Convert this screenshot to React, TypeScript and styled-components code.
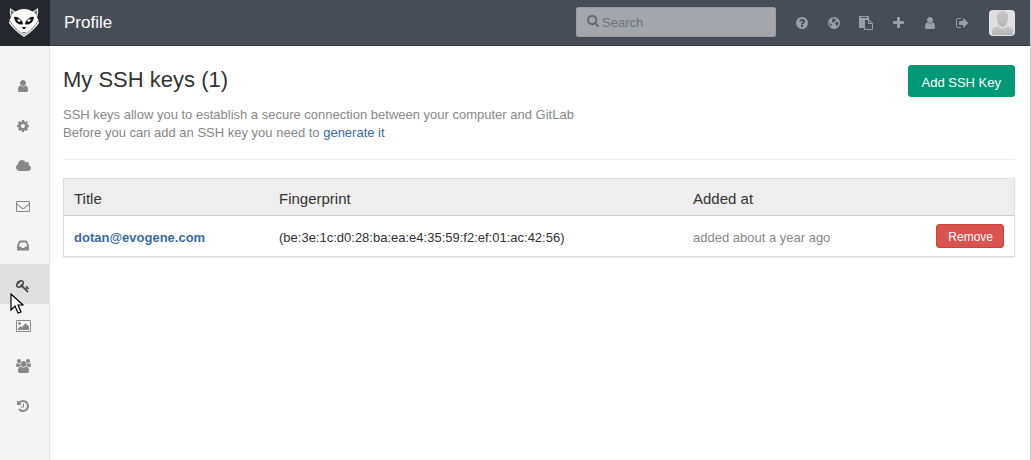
import React from "react";
import styled, { createGlobalStyle } from "styled-components";

const GlobalStyle = createGlobalStyle`
  * { box-sizing: border-box; }
  body {
    margin: 0;
    background: #fff;
    color: #333;
    font-family: "Liberation Sans", Arial, sans-serif;
    font-size: 13px;
    line-height: 18px;
  }
  a { color: #3b6a9e; text-decoration: none; }
  button, input { font: inherit; }
`;

/* Icon outlines are drawn in font units: y grows upwards, 1792 units per em. */
const glyphs = {
  user: { w: 1280, d: "M1280 137q0-109-62.5-187T1067-128H213q-88 0-150.5 78T0 137q0 85 8.5 160.5t31.5 152 58.5 131 94 89T327 704q131-128 313-128t313 128q76 0 134.5-34.5t94-89 58.5-131 31.5-152T1280 137zm-256 887q0-159-112.5-271.5T640 640 368.5 752.5 256 1024t112.5 271.5T640 1408t271.5-112.5T1024 1024z" },
  plus: { w: 1408, d: "M1408 800V608q0-40-28-68t-68-28H896V96q0-40-28-68T800 0H608q-40 0-68 28t-28 68v416H96q-40 0-68 28T0 608v192q0 40 28 68t68 28h416v416q0 40 28 68t68 28h192q40 0 68-28t28-68V896h416q40 0 68-28t28-68z" },
  search: { w: 1664, d: "M1152 704q0 185-131.5 316.5T704 1152 387.5 1020.5 256 704t131.5-316.5T704 256t316.5 131.5T1152 704zm512-832q0-52-38-90t-90-38q-54 0-90 38l-343 342Q924 0 704 0 561 0 430.5 55.5T205.5 205.5t-150 225T0 704t55.5 273.5 150 225 225 150T704 1408t273.5-55.5 225-150 150-225T1408 704q0-220-124-399l343-343q37-37 37-90z" },
  cog: { w: 1536, d: "M1024 640q0 106-75 181t-181 75-181-75-75-181 75-181 181-75 181 75 75 181zm512 109V527q0-12-8-23t-20-13l-185-28q-19-54-39-91 35-50 107-138 10-12 10-25t-9-23q-27-37-99-108t-94-71q-12 0-26 9l-138 108q-44-23-91-38-16-136-29-186-7-28-36-28H657q-14 0-24.5 8.5T621-98L593 86q-49 16-90 37L362 16q-10-9-25-9-14 0-25 11-126 114-165 168-7 10-7 23 0 12 8 23 15 21 51 66.5t54 70.5q-27 50-41 99L29 495q-13 2-21 12.5T0 531v222q0 12 8 23t19 13l186 28q14 46 39 92-40 57-107 138-10 12-10 24 0 10 9 23 26 36 98.5 107.5T337 1273q13 0 26-10l138-107q44 23 91 38 16 136 29 186 7 28 36 28h222q14 0 24.5-8.5T915 1378l28-184q49-16 90-37l142 107q9 9 24 9 13 0 25-10 129-119 165-170 7-8 7-22 0-12-8-23-15-21-51-66.5t-54-70.5q26-50 41-98l183-28q13-2 21-12.5t8-23.5z" },
  key: { w: 1683, d: "M832 1024q0 80-56 136t-136 56-136-56-56-136q0-42 19-83-41 19-83 19-80 0-136-56t-56-136 56-136 136-56 136 56 56 136q0 42-19 83 41-19 83-19 80 0 136 56t56 136zm851-704q0-17-49-66t-66-49q-9 0-28.5 16t-36.5 33-38.5 40-24.5 26l-96-96 220-220q28-28 28-68 0-42-39-81t-81-39q-40 0-68 28L733 515Q557 384 368 384q-163 0-265.5 102.5T0 752q0 160 95 313t248 248 313 95q163 0 265.5-102.5T1024 1040q0-189-131-365l355-355 96 96q-3 3-26 24.5t-40 38.5-33 36.5-16 28.5q0 17 49 66t66 49q13 0 23-10 6-6 46-44.5t82-79.5 86.5-86 73-78 28.5-41z" },
  cloud: { w: 1920, d: "M1920 384q0-159-112.5-271.5T1536 0H448Q263 0 131.5 131.5T0 448q0 132 71 241.5T258 853q-2 28-2 43 0 212 150 362t362 150q158 0 286.5-88T1242 1090q70 62 166 62 106 0 181-75t75-181q0-75-41-138 129-30 213-134.5T1920 384z" },
  inbox: { w: 1536, d: "M1023 576h316q-1 3-2.5 8t-2.5 8l-212 496H414L202 592q-1-2-2.5-8t-2.5-8h316l95-192h320zm513 30V128q0-26-19-45t-45-19H64q-26 0-45 19T0 128v478q0 62 25 123l238 552q10 25 36.5 42t52.5 17h832q26 0 52.5-17t36.5-42l238-552q25-61 25-123z" },
  envelope: { w: 1792, d: "M1664 32v768q-32-36-69-66-268-206-426-338-51-43-83-67t-86.5-48.5T897 256h-2q-48 0-102.5 24.5T706 329t-83 67Q465 528 197 734q-37 30-69 66V32q0-13 9.5-22.5T160 0h1472q13 0 22.5 9.5T1664 32zm0 1051v24.500l-.5 13-3 12.500-5.500 9-9 7.500-14 2.500H160q-13 0-22.500-9.500T128 1120q0-168 147-284 193-152 401-317 6-5 35-29.500t46-37.500 44.500-31.500T852 391t43-9h2q20 0 43 9t50.500 27.500T1035 450t46 37.500 35 29.500q208 165 401 317 54 43 100.500 115.500T1664 1083zm128 37V32q0-66-47-113t-113-47H160q-66 0-113 47T0 32v1088q0 66 47 113t113 47h1472q66 0 113-47t47-113z" },
  image: { w: 1920, d: "M640 960q0-80-56-136t-136-56-136 56-56 136 56 136 136 56 136-56 56-136zm1024-384V128H256v192l320 320 160-160 512 512zm96 704H160q-13 0-22.5-9.5T128 1248V32q0-13 9.5-22.5T160 0h1600q13 0 22.5 9.5T1792 32v1216q0 13-9.5 22.5t-22.5 9.500zm160-32V32q0-66-47-113t-113-47H160q-66 0-113 47T0 32v1216q0 66 47 113t113 47h1600q66 0 113-47t47-113z" },
  users: { w: 1920, d: "M593 640q-162-5-265-128H194q-82 0-138 40.5T0 671q0 353 124 353 6 0 43.5-21t97.5-42.5T384 939q67 0 133 23-5-37-5-66 0-139 81-256zm1071-637q0-120-73-189.5T1397-256H523q-121 0-194 69.5T256 3q0 53 3.5 103.5t14 109T300 324t43 97.5 62 81 85.5 53.5T602 576q10 0 43-21.5t73-48 107-48T960 437t135 21.5 107 48 73 48 43 21.500q61 0 111.5-20t85.5-53.5 62-81 43-97.5 26.5-108.5 14-109T1664 3zM640 1280q0-106-75-181t-181-75-181 75-75 181 75 181 181 75 181-75 75-181zm704-384q0-159-112.5-271.5T960 512 688.5 624.5 576 896t112.5 271.5T960 1280t271.5-112.5T1344 896zm576-225q0-78-56-118.5T1726 512h-134q-103 123-265 128 81 117 81 256 0 29-5 66 66-23 133-23 59 0 119 21.5t97.5 42.5 43.5 21q124 0 124-353zm-128 609q0-106-75-181t-181-75-181 75-75 181 75 181 181 75 181-75 75-181z" },
  history: { w: 1536, d: "M1536 640q0-156-61-298T1311 97t-245-164-298-61q-172 0-327 72.5T177 149q-7 10-6.5 22.5T179 192l137 138q10 9 25 9 16-2 23-12 73-95 179-147t225-52q104 0 198.5 40.5T1130 278t109.5 163.5T1280 640t-40.5 198.5T1130 1002t-163.5 109.5T768 1152q-98 0-188-35.5T420 1015l137-138q31-30 14-69-17-40-59-40H64q-26 0-45 19T0 832v448q0 42 40 59 39 17 69-14l130-129q107 101 244.5 156.5T768 1408q156 0 298-61t245-164 164-245 61-298zM896 928V480q0-14-9-23t-23-9H544q-14 0-23 9t-9 23v64q0 14 9 23t23 9h224v352q0 14 9 23t23 9h64q14 0 23-9t9-23z" },
  signOut: { w: 1568, d: "M640 96q0-4 1-20t.5-26.5-3-23.5-10-19.5T608 0H288Q169 0 84.5 84.5T0 288v704q0 119 84.5 203.5T288 1280h320q13 0 22.5-9.5t9.5-22.5q0-4 1-20t.5-26.5-3-23.5-10-19.5T608 1152H288q-66 0-113-47t-47-113V288q0-66 47-113t113-47h312l11.5-1 11.5-3 8-5.500 7-9 2-13.500zm928 544q0-26-19-45L1005 51q-19-19-45-19t-45 19-19 45v288H448q-26 0-45 19t-19 45v384q0 26 19 45t45 19h448v288q0 26 19 45t45 19 45-19l544-544q19-19 19-45z" },
  paste: { w: 1792, d: "M768-128h896v640h-416q-40 0-68 28t-28 68v416H768V-128zm256 1440v64q0 13-9.5 22.5t-22.5 9.5H288q-13 0-22.5-9.5T256 1376v-64q0-13 9.5-22.5t22.5-9.5h704q13 0 22.5 9.5t9.5 22.500zm256-672h299l-299 299V640zm512-128v-672q0-40-28-68t-68-28H736q-40 0-68 28t-28 68v160H96q-40 0-68 28T0 96v1344q0 40 28 68t68 28h1088q40 0 68-28t28-68v-328q21-13 36-28l408-408q28-28 48-76t20-88z" },
  help: { w: 1536, d: "M896 160v192q0 14-9 23t-23 9H672q-14 0-23-9t-9-23V160q0-14 9-23t23-9h192q14 0 23 9t9 23zm256 672q0 88-55.5 163T958 1111t-170 41q-243 0-371-213-15-24 8-42l132-100q7-6 19-6 16 0 25 12 53 68 86 92 34 24 86 24 48 0 85.5-26t37.5-59q0-38-20-61t-68-45q-63-28-115.5-86.5T640 516v-36q0-14 9-23t23-9h192q14 0 23 9t9 23q0 19 21.5 49.5T972 579q32 18 49 28.5t46 35 44.5 48 28 60.5 12.5 81zm384-192q0-209-103-385.5T1153.5-25 768-128 382.5-25 103 254.5 0 640t103 385.5T382.5 1305 768 1408t385.5-103T1433 1025.5 1536 640z" },
  globe: { w: 1536, d: "M768 1408a768 768 0 1 0 0-1536a768 768 0 1 0 0 1536zM640 1270L860 1200 780 1110 900 1060 1000 1140 1120 1050 980 980 900 880 800 800 760 690 660 740 540 700 480 820 560 920 500 1050 560 1130zM1000 740L1130 800 1300 740 1340 560 1220 380 1120 220 1020 300 1020 480 900 580zM200 700L330 560 480 480 440 330 380 200 260 330 200 480z" },
};

type GlyphName = keyof typeof glyphs;

const Icon = ({ name, size = 14 }: { name: GlyphName; size?: number }) => (
  <svg
    aria-hidden="true"
    width={(glyphs[name].w / 1792) * size}
    height={size}
    viewBox={`0 -1536 ${glyphs[name].w} 1792`}
    fill="currentColor"
    overflow="visible"
  >
    <path transform="scale(1 -1)" fillRule="evenodd" d={glyphs[name].d} />
  </svg>
);

const Page = styled.div`
  display: flex;
  flex-direction: column;
  min-height: 100vh;
  border-right: 1px solid #ccc;
`;

const Header = styled.header`
  display: flex;
  align-items: center;
  height: 46px;
  background: #474d57;
  border-bottom: 1px solid #373d47;
  padding-right: 15px;
`;

const LogoLink = styled.a`
  display: flex;
  justify-content: center;
  align-items: center;
  width: 50px;
  height: 46px;
  padding-right: 2px;
  background: #24272d;
`;

const PageName = styled.h1`
  margin: 0 auto 0 14px;
  color: #fff;
  font-size: 17px;
  font-weight: 400;
  line-height: 44px;
`;

const SearchBox = styled.label`
  display: flex;
  align-items: center;
  gap: 3px;
  width: 200px;
  height: 30px;
  margin: 0 10px 2px 0;
  padding: 0 10px;
  border-radius: 2px;
  border: 1px solid #989da4;
  background: #a3a6ab;
  color: #666a70;

  svg { margin-bottom: 2px; }
`;

const SearchInput = styled.input`
  flex: 1;
  min-width: 0;
  padding: 2px 0 0;
  border: 0;
  outline: 0;
  background: transparent;
  color: #333;
  &::placeholder { color: #6f7276; opacity: 1; }
`;

const HeaderNav = styled.nav`
  display: flex;
  align-items: center;
`;

const HeaderLink = styled.a`
  display: flex;
  justify-content: center;
  width: 32px;
  color: #979faa;
`;

const Avatar = styled.a`
  display: flex;
  width: 26px;
  height: 26px;
  margin-left: 11px;
  border-radius: 4px;
  overflow: hidden;
`;

const Body = styled.div`
  display: flex;
  flex: 1;
`;

const Sidebar = styled.nav`
  flex: none;
  width: 50px;
  padding-top: 18px;
  background: #f4f4f4;
  border-right: 1px solid #e6e6e6;
`;

const SideLink = styled.a<{ $active?: boolean }>`
  display: flex;
  align-items: center;
  justify-content: center;
  height: 40px;
  padding: 4px 3px 0 0;
  background: ${(p) => (p.$active ? "#dfdfdf" : "transparent")};
  color: ${(p) => (p.$active ? "#444" : "#888")};
`;

const Content = styled.main`
  flex: 1;
  min-width: 0;
  padding: 19px 15px 20px 13px;
`;

const TitleRow = styled.div`
  display: flex;
  justify-content: space-between;
  align-items: flex-start;
`;

const Title = styled.h2`
  margin: 0 0 11px;
  font-size: 22px;
  font-weight: 400;
  line-height: 30px;
`;

const Button = styled.button<{ $danger?: boolean }>`
  height: ${(p) => (p.$danger ? 24 : 32)}px;
  padding: ${(p) => (p.$danger ? "1px 10px 0 11px" : "3px 13px 0")};
  border: 1px solid ${(p) => (p.$danger ? "#d43f3a" : "#019875")};
  border-radius: 3px;
  background: ${(p) => (p.$danger ? "#d9534f" : "#019875")};
  color: #fff;
  font-size: ${(p) => (p.$danger ? 12 : 13)}px;
`;

const Intro = styled.p`
  margin: 0 0 17px;
  color: #888;
`;

const Rule = styled.hr`
  margin: 0 0 18px;
  border: 0;
  border-top: 1px solid #eee;
`;

const Table = styled.table`
  width: 100%;
  border-collapse: separate;
  border-spacing: 0;
  border: 1px solid #ddd;
  box-shadow: 0 1px 1px rgba(0, 0, 0, 0.08);
`;

const HeadCell = styled.th<{ $width: string }>`
  width: ${(p) => p.$width};
  height: 37px;
  padding: 4px 10px 0;
  background: #eee;
  border-bottom: 1px solid #ccc;
  font-size: 15px;
  font-weight: 400;
  text-align: left;
`;

const Cell = styled.td<{ $muted?: boolean; $right?: boolean }>`
  height: 40px;
  padding: 3px 10px 0;
  color: ${(p) => (p.$muted ? "#888" : "#333")};
  text-align: ${(p) => (p.$right ? "right" : "left")};
`;

const ActionCell = styled(Cell)`
  padding-top: 0;
`;

const Cursor = styled.svg`
  position: absolute;
  left: 10px;
  top: 293px;
`;

const headerLinks: { name: GlyphName; label: string }[] = [
  { name: "help", label: "Help" },
  { name: "globe", label: "Public area" },
  { name: "paste", label: "Snippets" },
  { name: "plus", label: "New project" },
  { name: "user", label: "Your profile" },
  { name: "signOut", label: "Sign out" },
];

const sideLinks: { name: GlyphName; label: string }[] = [
  { name: "user", label: "Profile" },
  { name: "cog", label: "Account" },
  { name: "cloud", label: "Applications" },
  { name: "envelope", label: "Emails" },
  { name: "inbox", label: "Notifications" },
  { name: "key", label: "SSH Keys" },
  { name: "image", label: "Design" },
  { name: "users", label: "Groups" },
  { name: "history", label: "History" },
];

const Logo = () => (
  <svg width="32" height="30" viewBox="0 0 32 30" aria-hidden="true">
    <path fill="#e4e4e4" d="M2 0l6 4-5 6q-2-5-1-10zM30 0l-6 4 5 6q2-5 1-10z" />
    <path fill="#777" d="M3 2l3 2-3 3zM29 2l-3 2 3 3z" />
    <path fill="#fff" d="M16 1q6 0 10 4l4 6 1 4q-2 3-5 6-4 4-10 8-6-4-10-8-3-3-5-6l1-4 4-6q4-4 10-4z" />
    <path fill="none" stroke="#777" strokeWidth="0.9" d="M2 13q2 4 5 7 4 4 9 7 5-3 9-7 3-3 5-7" />
    <path fill="#111" d="M6 9q3-1 6 2 3 2 3 5-2 1-4 0-4-1-5-7zM26 9q-3-1-6 2-3 2-3 5 2 1 4 0 4-1 5-7zM14 19h4l-1 2h-2zM14 24h4l-2 1z" />
    <path fill="#fff" d="M9 12l2-1 2 2-2 1zM23 12l-2-1-2 2 2 1z" />
  </svg>
);

const AvatarPicture = () => (
  <svg width="26" height="26" viewBox="0 0 26 26" aria-hidden="true">
    <defs>
      <linearGradient id="shade" x2="0" y2="1">
        <stop offset="0" stopColor="#cacaca" />
        <stop offset="1" stopColor="#b4b4b4" />
      </linearGradient>
    </defs>
    <rect width="26" height="26" fill="#e0e0e0" />
    <path fill="url(#shade)" d="M13.500 1c4 0 6 3 5.500 7-.5 5-2.500 9-5.500 9S8.500 13 8 8c-.5-4 1.500-7 5.500-7z" />
    <path fill="url(#shade)" d="M3 25v-4c0-3 3-4 6-5 2 3 7 3 9 0 3 1 6 2 6 5v4z" />
  </svg>
);

export default function App() {
  return (
    <>
      <GlobalStyle />
      <Page>
        <Header>
          <LogoLink href="#" aria-label="Dashboard"><Logo /></LogoLink>
          <PageName>Profile</PageName>
          <SearchBox>
            <Icon name="search" size={13} />
            <SearchInput type="text" placeholder="Search" aria-label="Search" />
          </SearchBox>
          <HeaderNav>
            {headerLinks.map((l) => (
              <HeaderLink key={l.name} href="#" aria-label={l.label}><Icon name={l.name} /></HeaderLink>
            ))}
            <Avatar href="#" aria-label="Profile"><AvatarPicture /></Avatar>
          </HeaderNav>
        </Header>
        <Body>
          <Sidebar>
            {sideLinks.map((l) => (
              <SideLink key={l.name} href="#" aria-label={l.label} $active={l.name === "key"}>
                <Icon name={l.name} />
              </SideLink>
            ))}
          </Sidebar>
          <Content>
            <TitleRow>
              <Title>My SSH keys (1)</Title>
              <Button type="button">Add SSH Key</Button>
            </TitleRow>
            <Intro>
              SSH keys allow you to establish a secure connection between your computer and GitLab
              <br />
              Before you can add an SSH key you need to <a href="#">generate it</a>
            </Intro>
            <Rule />
            <Table>
              <thead>
                <tr>
                  <HeadCell $width="205px">Title</HeadCell>
                  <HeadCell $width="414px">Fingerprint</HeadCell>
                  <HeadCell $width="auto">Added at</HeadCell>
                  <HeadCell $width="auto" aria-label="Actions" />
                </tr>
              </thead>
              <tbody>
                <tr>
                  <Cell><a href="#"><strong>dotan@evogene.com</strong></a></Cell>
                  <Cell>(be:3e:1c:d0:28:ba:ea:e4:35:59:f2:ef:01:ac:42:56)</Cell>
                  <Cell $muted>added about a year ago</Cell>
                  <ActionCell $right><Button type="button" $danger>Remove</Button></ActionCell>
                </tr>
              </tbody>
            </Table>
          </Content>
        </Body>
      </Page>
      <Cursor width="14" height="21" viewBox="0 0 14 21" aria-hidden="true">
        <path fill="#fff" stroke="#000" strokeWidth="1.2" d="M1 1v16l4-4 3 7 3-1-3-7h5z" />
      </Cursor>
    </>
  );
}
